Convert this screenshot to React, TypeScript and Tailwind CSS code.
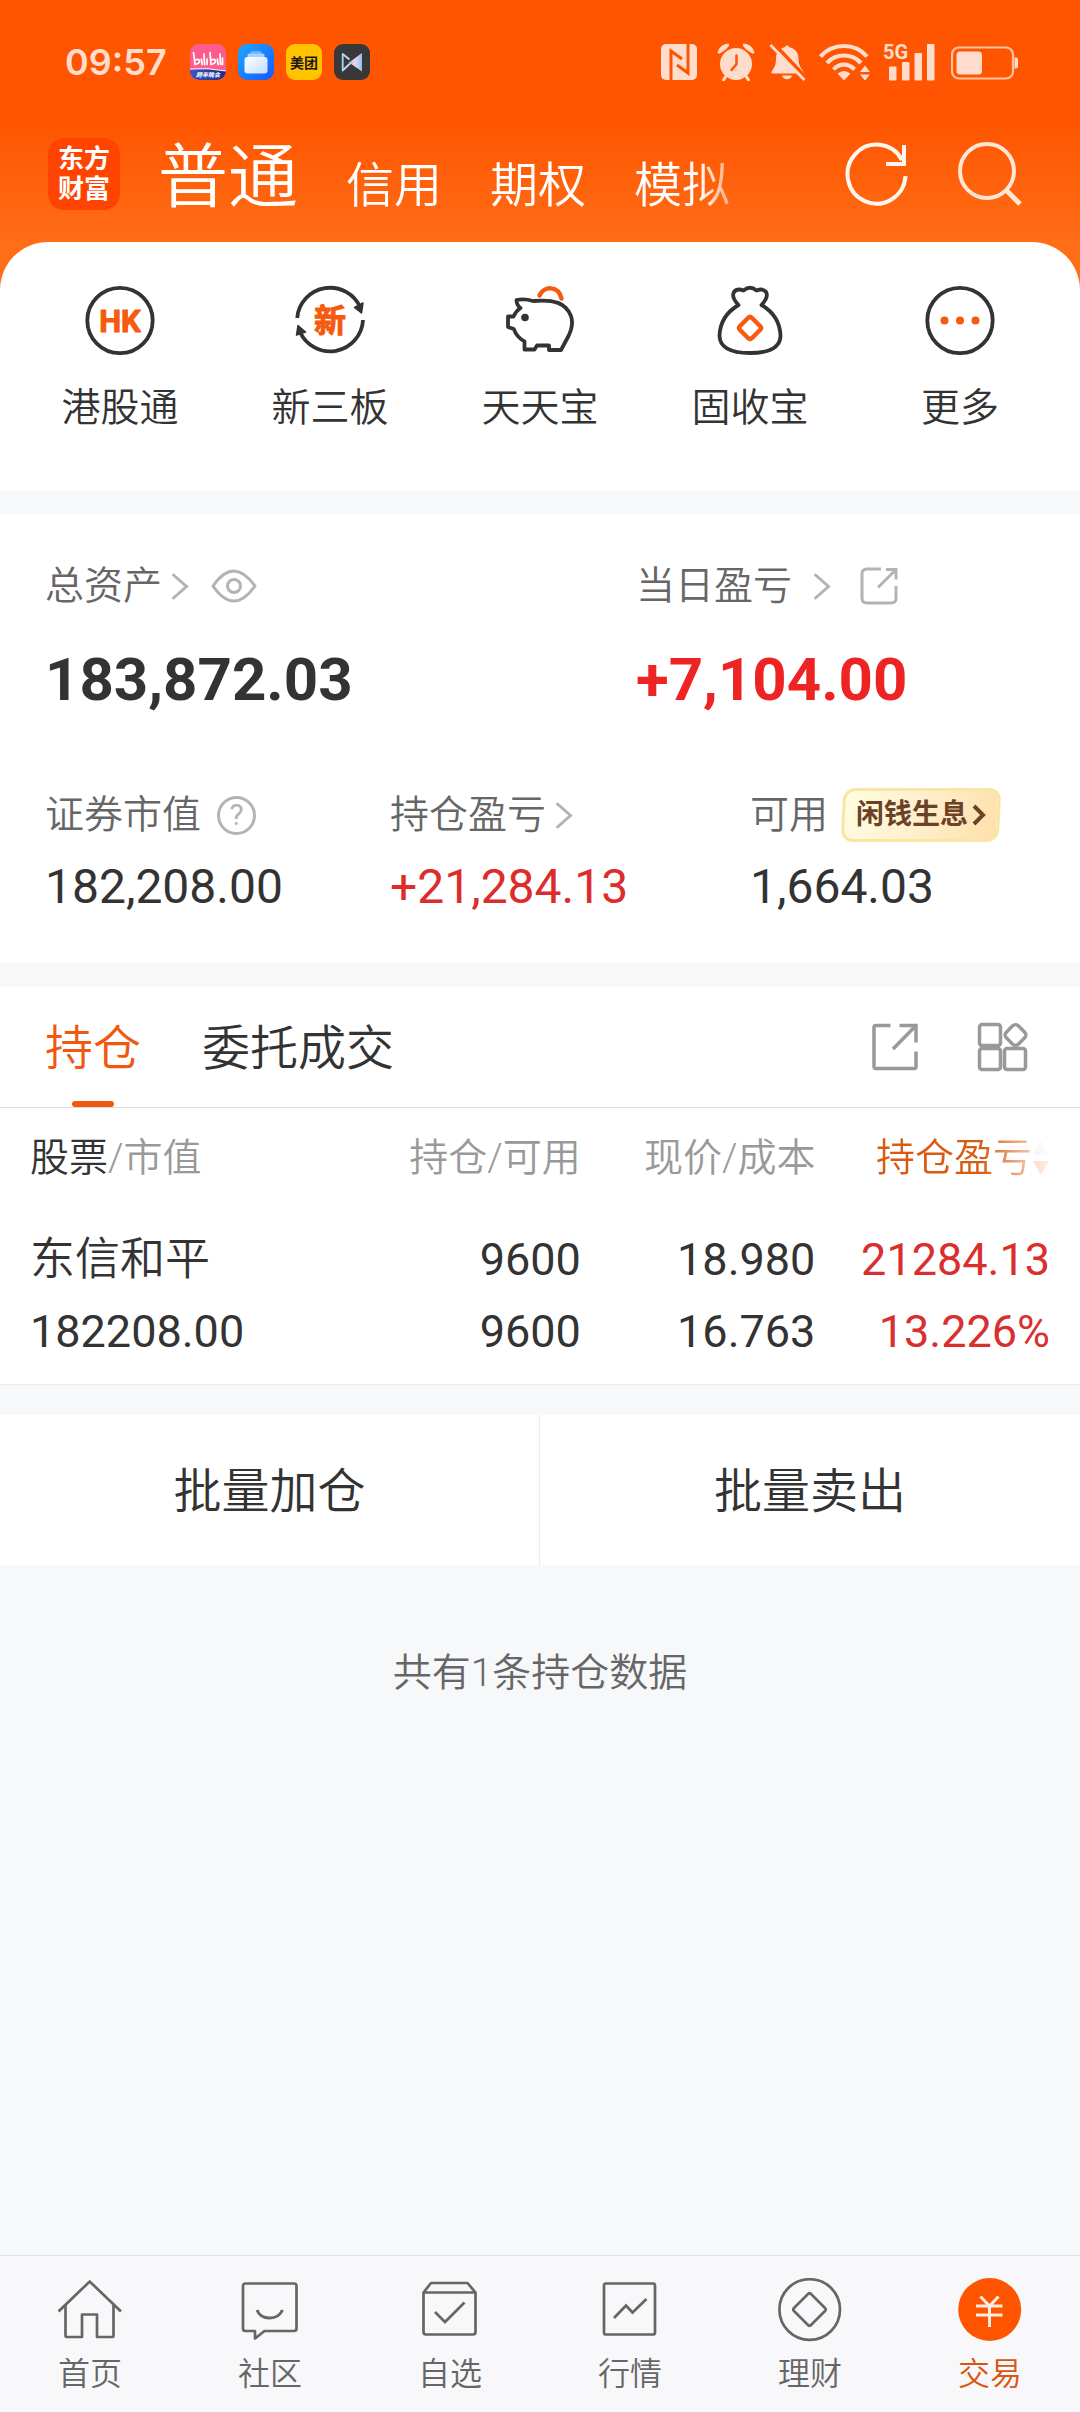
import type { ReactNode } from "react";

const STATUS = "#ffdccb";

function StatusIcons() {
  return (
    <div className="flex items-center" aria-hidden="true">
      <svg width="36" height="36" viewBox="0 0 36 36" fill="none">
        <rect width="36" height="36" rx="5" fill={STATUS} />
        <path d="M10 36V7l11 8M27 0v29L16 21" stroke="#ff5500" strokeWidth="3" />
      </svg>
      <svg className="ml-5" width="38" height="38" viewBox="0 0 38 38" fill="none">
        <circle cx="19" cy="21" r="16" fill={STATUS} />
        <path d="M1 9.500Q3 1.500 11.500 1Q13 4 2 10.500ZM37 9.500Q35 1.500 26.500 1Q25 4 36 10.500Z" fill={STATUS} stroke={STATUS} strokeLinejoin="round" />
        <path d="M9 33l-2.500 4M29 33l2.500 4" stroke={STATUS} strokeWidth="3" strokeLinecap="round" />
        <path d="M19.500 12.500v8.500l-5 6" stroke="#ff5500" strokeWidth="2.500" strokeLinecap="round" />
      </svg>
      <svg className="ml-[14px]" width="38" height="38" viewBox="0 0 38 38" fill="none">
        <path d="M18 2.500c1.500 0 2 1 2.200 1.700 6 1.300 9.300 5.500 9.300 11.300 0 8 3 9.500 5 13.500.5 1-.2 1.500-1 1.500H3.500c-1 0-1.500-.8-1-1.500 2-4 4.500-5.500 4.500-13.500 0-5.800 3-10 8.800-11.300.2-.7.700-1.700 2.200-1.700Z" fill={STATUS} />
        <path d="M13 32.500h10c-1 5-9 5-10 0Z" fill={STATUS} />
        <path d="M4 0l34 36" stroke="#ff5500" strokeWidth="4" />
        <path d="M1.500 2l34 35" stroke={STATUS} strokeWidth="2.800" />
      </svg>
      <svg className="ml-3" width="52" height="38" viewBox="0 0 52 38" fill="none">
        <g stroke={STATUS} strokeWidth="4.200">
          <path d="M1.500 13.500C14-.5 36-.5 48 13.500" />
          <path d="M8 20C17 10 33 10 42 20" />
          <path d="M14.500 26.500C20 20 29.500 20 35.500 26.500" />
        </g>
        <path d="M18.500 30.500Q25 25.500 31.500 30.500L25 37.500Z" fill={STATUS} />
        <path d="M41 29l5-6.500 5 6.500ZM41 31.500h10l-5 6Z" fill={STATUS} />
      </svg>
      <svg className="ml-3" width="52" height="54" viewBox="0 -8 52 54" fill={STATUS}>
        <text x="0" y="16" fontSize="20" fontWeight="700" fontFamily="Roboto, sans-serif">5G</text>
        <rect x="6" y="23.500" width="7.500" height="14" rx="1" />
        <rect x="19" y="19" width="7.500" height="18.500" rx="1" />
        <rect x="31.500" y="10" width="7.500" height="27.500" rx="1" />
        <rect x="44" y="1" width="7.500" height="36.500" rx="1" />
      </svg>
      <svg className="ml-4" width="68" height="38" viewBox="0 0 68 38" fill="none">
        <rect x="1" y="4.500" width="61" height="31" rx="7" stroke="#ffc49f" strokeWidth="2.200" />
        <rect x="5.500" y="8.500" width="25.500" height="23" rx="3.500" fill={STATUS} />
        <path d="M63.500 14.500h1.500a2 2 0 0 1 2 2v7a2 2 0 0 1-2 2h-1.500Z" fill={STATUS} />
      </svg>
    </div>
  );
}

function AppBadges() {
  return (
    <div className="flex items-center gap-3" aria-hidden="true">
      <svg width="36" height="36" viewBox="0 0 36 36">
        <defs>
          <clipPath id="bili"><rect width="36" height="36" rx="9" /></clipPath>
          <linearGradient id="biliBottom" x1="0" x2="1" y1="0" y2="0">
            <stop offset="0" stopColor="#3d55c4" />
            <stop offset="1" stopColor="#1b2c86" />
          </linearGradient>
        </defs>
        <g clipPath="url(#bili)">
          <rect width="36" height="36" fill="#ff5c8e" />
          <path d="M0 25.500Q18 23.500 36 27v9H0Z" fill="url(#biliBottom)" />
          <path d="M0 25Q18 23.500 36 27" stroke="#fff" strokeWidth="1" fill="none" />
          <g stroke="#fff" strokeWidth="1.700" fill="none" strokeLinecap="round" strokeLinejoin="round">
            <path d="M3.500 8.500l1.500 12q5-1 4.500-4-1-2-4.500-.5M11.500 15l.5 5.500M14 10l.5 10.500M17 15v5.500" />
            <path d="M20 8.500l1 12q5-1 4.500-4-1-2-4.500-.5M27.500 15l.5 5.500M30 10l.5 10.500M32.500 14v6.500" />
          </g>
        </g>
        <text x="18" y="33" textAnchor="middle" fontSize="6" fontWeight="700" fontStyle="italic" fill="#fff" fontFamily="'Noto Sans CJK SC', sans-serif">跨年晚会</text>
      </svg>
      <svg width="36" height="36" viewBox="0 0 36 36">
        <defs>
          <linearGradient id="wallet" x1="0" y1="0" x2="1" y2="1">
            <stop offset="0" stopColor="#1fa8ff" />
            <stop offset="1" stopColor="#1559ff" />
          </linearGradient>
          <linearGradient id="walletCard" x1="0" y1="0" x2="1" y2="1">
            <stop offset="0" stopColor="#ffffff" />
            <stop offset="1" stopColor="#c5dcff" />
          </linearGradient>
        </defs>
        <rect width="36" height="36" rx="9" fill="url(#wallet)" />
        <rect x="12.500" y="7" width="11" height="4" rx="1.500" fill="#64b4ff" />
        <rect x="9.500" y="9.500" width="17" height="5" rx="1.500" fill="#a2d2ff" />
        <rect x="6.500" y="13" width="23" height="16.500" rx="3" fill="url(#walletCard)" />
      </svg>
      <svg width="36" height="36" viewBox="0 0 36 36">
        <rect width="36" height="36" rx="9" fill="#ffc300" />
        <text x="18" y="23.500" textAnchor="middle" fontSize="14" fontWeight="700" fill="#1c1a12" fontFamily="'Noto Sans CJK SC', sans-serif">美团</text>
      </svg>
      <svg width="36" height="36" viewBox="0 0 36 36">
        <defs>
          <linearGradient id="bow" x1="0" x2="1" y1="0" y2="0">
            <stop offset="0" stopColor="#9adcf0" />
            <stop offset=".5" stopColor="#f3cdea" />
            <stop offset="1" stopColor="#86c8ee" />
          </linearGradient>
        </defs>
        <rect width="36" height="36" rx="9" fill="#383838" />
        <path d="M28 9v18.500L15 18.500Z" fill="url(#bow)" />
        <path d="M15.500 15.500L8.700 10v16.500l9.500-9" stroke="url(#bow)" strokeWidth="1.800" fill="none" strokeLinejoin="round" />
      </svg>
    </div>
  );
}

function QuickSvg({ children }: { children: ReactNode }) {
  return (
    <svg width="72" height="72" viewBox="0 0 72 72" fill="none" stroke="#333333" strokeWidth="3.800" strokeLinejoin="round" aria-hidden="true">
      {children}
    </svg>
  );
}

const quickLinks = [
  {
    label: "港股通",
    icon: (
      <QuickSvg>
        <circle cx="36" cy="36.500" r="32.700" />
        <text x="36" y="48" textAnchor="middle" fontSize="31" fontWeight="700" fill="#f55a0f" stroke="#f55a0f" strokeWidth="1" fontFamily="Roboto, sans-serif">HK</text>
      </QuickSvg>
    ),
  },
  {
    label: "新三板",
    icon: (
      <QuickSvg>
        <path d="M3.200 34A33 33 0 0 1 66.500 24M69 36A33 33 0 0 1 6 48" />
        <path d="M60.500 23.500L69 19l-1.500 10ZM4 41.500l7.500 6.500L2.500 51Z" fill="#333333" strokeWidth="1.500" />
        <text x="36" y="48" textAnchor="middle" fontSize="32" fontWeight="700" fill="#f55a0f" stroke="#f55a0f" strokeWidth="1" fontFamily="'Noto Sans CJK SC', sans-serif">新</text>
      </QuickSvg>
    ),
  },
  {
    label: "天天宝",
    icon: (
      <QuickSvg>
        <path d="M12.500 16Q21 14.500 29 17C50 15 62 19 67 32Q70 41 64.500 52L57 66H45v-4.500H33L30.500 65.500H20.500V57.500Q12.500 53 9.800 45L4 43V32.500H9.500Q12 27 16.500 24Q12.500 21 12.500 16Z" />
        <circle cx="21" cy="33.500" r="3.800" fill="#333333" stroke="none" />
        <path d="M35.500 11.500C40 1.500 54.500 1.500 57.500 14.500" stroke="#f55a0f" strokeWidth="4.500" strokeLinecap="round" />
      </QuickSvg>
    ),
  },
  {
    label: "固收宝",
    icon: (
      <QuickSvg>
        <path d="M24.500 21Q17 13 20 8Q23 4 29.500 6.500Q36 1 42.500 6.500Q49 4 52 8Q55 13 47.500 21Q66 32 66.500 52C66 65 54 69 36 69S6 65 5.500 52Q6 32 24.500 21Z" />
        <path d="M38 34l8 8q2 2 0 4l-8 8q-2 2-4 0l-8-8q-2-2 0-4l8-8q2-2 4 0Z" stroke="#f55a0f" strokeWidth="4.500" />
      </QuickSvg>
    ),
  },
  {
    label: "更多",
    icon: (
      <QuickSvg>
        <circle cx="36" cy="36.500" r="32.700" />
        <g fill="#f55a0f" stroke="none">
          <circle cx="20.500" cy="36.500" r="4" />
          <circle cx="36" cy="36.500" r="4" />
          <circle cx="51.500" cy="36.500" r="4" />
        </g>
      </QuickSvg>
    ),
  },
];

function NavSvg({ children }: { children: ReactNode }) {
  return (
    <svg width="64" height="64" viewBox="0 0 64 64" fill="none" stroke="#666666" strokeWidth="2.700" strokeLinejoin="round" aria-hidden="true">
      {children}
    </svg>
  );
}

const navItems = [
  {
    label: "首页",
    icon: (
      <NavSvg>
        <path d="M.5 33.500L31.700 3.500 63 33.500" strokeLinejoin="miter" />
        <path d="M7.500 27v30.500q0 1.500 1.500 1.500h15V36.500h15V59h15q1.500 0 1.500-1.500V27" />
      </NavSvg>
    ),
  },
  {
    label: "社区",
    icon: (
      <NavSvg>
        <path d="M7.500 5.500h48.500q2.500 0 2.500 2.500v42.500q0 2.500-2.500 2.500H26.500L17 60.500V53H7.500Q5 53 5 50.500V8q0-2.500 2.500-2.500Z" />
        <path d="M19 32Q22 40 31.500 40T44.500 32" strokeWidth="3" />
      </NavSvg>
    ),
  },
  {
    label: "自选",
    icon: (
      <NavSvg>
        <path d="M5.500 14.500L13 5h36.500l8 9.500V54q0 2.500-2.500 2.500H8q-2.500 0-2.500-2.500ZM5.500 14.500h52" />
        <path d="M17 34l10 10 19.500-19.500" strokeLinejoin="miter" />
      </NavSvg>
    ),
  },
  {
    label: "行情",
    icon: (
      <NavSvg>
        <rect x="6" y="5.500" width="51" height="51" rx="2" />
        <path d="M16 40l12-12.500 6.500 7L48.500 21" strokeLinejoin="miter" />
      </NavSvg>
    ),
  },
  {
    label: "理财",
    icon: (
      <NavSvg>
        <circle cx="31.700" cy="31.500" r="30.300" />
        <path d="M33 16l14 14q1.500 1.500 0 3L33 47q-1.500 1.500-3 0L16 33q-1.500-1.500 0-3l14-14q1.500-1.500 3 0Z" />
      </NavSvg>
    ),
  },
  {
    label: "交易",
    active: true,
    icon: (
      <NavSvg>
        <circle cx="31.700" cy="31.500" r="31.500" fill="#ff5500" stroke="none" />
        <path d="M22.500 18.500l9 9.500 9-9.500M18 28h26.500M18 37h26.500M31.500 28v21" stroke="#ffece2" strokeWidth="3" strokeLinejoin="miter" />
      </NavSvg>
    ),
  },
];

function Chevron() {
  return (
    <svg width="18" height="28" viewBox="0 0 18 28" fill="none" stroke="#b3b3b3" strokeWidth="3" strokeLinecap="round" aria-hidden="true">
      <path d="M2.500 3L15.500 14.500 2.500 26" />
    </svg>
  );
}

const holdings = [
  { name: "东信和平", value: "182208.00", held: "9600", available: "9600", price: "18.980", cost: "16.763", profit: "21284.13", rate: "13.226%" },
];

export default function App() {
  return (
    <div className="flex min-h-screen w-full flex-col bg-[#f7f8fa] font-[Roboto,'Noto_Sans_CJK_SC',sans-serif] text-[#333333]">
      <header className="bg-[linear-gradient(to_bottom,#ff5500_120px,#ff6d17_242px)] pt-[43px] pb-20">
        <div className="flex h-[38px] items-center justify-between pr-[61px] pl-[65px]">
          <div className="flex items-center gap-[23px]">
            <span className="font-[Inter,sans-serif] text-[36px] leading-[38px] font-semibold text-[#ffdccb]">09:57</span>
            <AppBadges />
          </div>
          <StatusIcons />
        </div>
        <div className="mt-[57px] flex h-[72px] items-center pr-[57px] pl-12">
          <div className="flex size-[72px] shrink-0 flex-col items-center justify-center rounded-2xl bg-[#ff4400] text-[26px] leading-[30px] font-bold text-white">
            <span>东方</span>
            <span>财富</span>
          </div>
          <nav className="ml-[38px] flex flex-1 items-baseline gap-12 overflow-hidden pt-4 whitespace-nowrap text-white [mask-image:linear-gradient(to_right,#000_540px,transparent_600px)]">
            <button className="text-[70px] leading-[80px] font-[350]">普通</button>
            <button className="text-[48px] leading-[80px] font-[350]">信用</button>
            <button className="text-[48px] leading-[80px] font-[350]">期权</button>
            <button className="text-[48px] leading-[80px] font-[350]">模拟</button>
          </nav>
          <div className="flex items-center gap-12">
            <button aria-label="刷新">
              <svg width="64" height="66" viewBox="0 0 64 66" fill="none" stroke="#fff6ef" strokeWidth="4">
                <path d="M60.500 35A29 29.500 0 1 1 57 19" />
                <path d="M59 4v19H41" />
              </svg>
            </button>
            <button aria-label="搜索">
              <svg width="66" height="66" viewBox="0 0 66 66" fill="none" stroke="#ffe6d4" strokeWidth="4">
                <circle cx="30" cy="30" r="27" />
                <path d="M49 49l14 14" strokeWidth="5" />
              </svg>
            </button>
          </div>
        </div>
      </header>

      <main className="flex-1">
        <section className="-mt-12 grid grid-cols-5 rounded-t-[48px] bg-white px-[15px] pt-[42px] pb-[58px]">
          {quickLinks.map((q) => (
            <button key={q.label} className="flex flex-col items-center gap-7">
              {q.icon}
              <span className="text-[39px] leading-[48px] font-[350]">{q.label}</span>
            </button>
          ))}
        </section>

        <section className="mt-6 bg-white pt-12 pb-12 pl-[45px]">
          <div className="grid grid-cols-[591fr_444fr]">
            <div>
              <div className="flex h-12 items-center text-[39px] leading-[48px] font-[350] text-[#666666]">
                总资产
                <span className="ml-[9px] flex"><Chevron /></span>
                <button className="ml-[22px]" aria-label="显示或隐藏资产">
                  <svg width="46" height="34" viewBox="0 0 46 34" fill="none" stroke="#b3b3b3" strokeWidth="3">
                    <path d="M2 17Q22.500-13 44 17Q22.500 47 2 17Z" strokeLinejoin="round" />
                    <circle cx="23" cy="17" r="6.500" />
                  </svg>
                </button>
              </div>
              <div className="mt-[34px] text-[60px] leading-[72px] font-bold">183,872.03</div>
            </div>
            <div>
              <div className="flex h-12 items-center text-[39px] leading-[48px] font-[350] text-[#666666]">
                当日盈亏
                <span className="ml-[21px] flex"><Chevron /></span>
                <button className="ml-7" aria-label="分享当日盈亏">
                  <svg width="40" height="40" viewBox="0 0 40 40" fill="none" stroke="#b3b3b3" strokeWidth="3">
                    <path d="M22 3H8Q3 3 3 8v24q0 5 5 5h24q5 0 5-5V20" />
                    <path d="M27 3.500h10v10M37 3.500L19 21.500" />
                  </svg>
                </button>
              </div>
              <div className="mt-[34px] text-[60px] leading-[72px] font-bold text-[#ee2424]">+7,104.00</div>
            </div>
          </div>
          <div className="mt-[75px] grid grid-cols-[345fr_360fr_330fr]">
            <div>
              <div className="flex h-12 items-center text-[39px] leading-[48px] font-[350] text-[#666666]">
                证券市值
                <button className="ml-4 flex size-[39px] items-center justify-center rounded-full border-[3px] border-[#b3b3b3] text-[30px] leading-[30px] font-normal text-[#b3b3b3]" aria-label="说明">?</button>
              </div>
              <div className="mt-5 text-[48px] leading-[56px]">182,208.00</div>
            </div>
            <div>
              <div className="flex h-12 items-center text-[39px] leading-[48px] font-[350] text-[#666666]">
                持仓盈亏
                <span className="ml-[9px] flex"><Chevron /></span>
              </div>
              <div className="mt-5 text-[48px] leading-[56px] text-[#dc2c2c]">+21,284.13</div>
            </div>
            <div>
              <div className="flex h-12 items-center text-[39px] leading-[48px] font-[350] text-[#666666]">
                可用
                <button className="relative ml-[14px] flex h-[54px] items-center gap-1 px-[14px] text-[28px] leading-[54px] font-bold text-[#6b4226]">
                  <span className="absolute inset-0 -skew-x-3 rounded-xl border-[3px] border-[#fae6a4] bg-[linear-gradient(105deg,#fffde0,#fff0cf_45%,#fee0ab)]" />
                  <span className="relative">闲钱生息</span>
                  <svg className="relative" width="14" height="22" viewBox="0 0 14 22" fill="none" stroke="#6b4226" strokeWidth="4" aria-hidden="true">
                    <path d="M2 2l9 9-9 9" />
                  </svg>
                </button>
              </div>
              <div className="mt-5 text-[48px] leading-[56px]">1,664.03</div>
            </div>
          </div>
        </section>

        <section className="mt-6 border-b border-[#ececee] bg-white">
          <div className="flex h-[121px] items-stretch border-b border-[#dddddd] pr-[51px] pl-[45px]">
            <button className="relative pt-1 text-[48px] leading-[116px] font-[350] text-[#f0580f]">
              持仓
              <span className="absolute bottom-0 left-1/2 h-1.5 w-[42px] -translate-x-1/2 rounded-full bg-[#f0580f]" />
            </button>
            <button className="ml-[61px] pt-1 text-[48px] leading-[116px] font-[350]">委托成交</button>
            <button className="ml-auto" aria-label="分享持仓">
              <svg width="48" height="48" viewBox="0 0 48 48" fill="none" stroke="#999999" strokeWidth="3.500">
                <path d="M19.500 2.500H5Q3 2.500 3 4.500v39q0 2 2 2h38q2 0 2-2V28.500" />
                <path d="M28.500 2.500H45v17M45 2.500L22 26" />
              </svg>
            </button>
            <button className="ml-[58px]" aria-label="更多功能">
              <svg width="52" height="50" viewBox="0 0 52 50" fill="none" stroke="#999999" strokeWidth="3.500">
                <rect x="2.500" y="2.500" width="21" height="21" rx="2.500" />
                <rect x="2.500" y="26.500" width="21" height="21" rx="2.500" />
                <rect x="27.500" y="26.500" width="21" height="21" rx="2.500" />
                <rect x="30" y="4.500" width="17" height="17" rx="4" transform="rotate(45 38.500 13)" />
              </svg>
            </button>
          </div>
          <div className="px-[30px] pb-4">
            <table className="w-full table-fixed border-collapse">
              <thead>
                <tr className="text-[39px] leading-[60px] text-[#999999]">
                  <th className="w-[30%] pt-5 pb-9 text-left font-[350]"><span className="text-[#333333]">股票</span>/市值</th>
                  <th className="w-[24%] pt-5 pb-9 text-right font-[350]">持仓/可用</th>
                  <th className="w-[23%] pt-5 pb-9 text-right font-[350]">现价/成本</th>
                  <th className="w-[23%] pt-5 pb-9 font-[350]">
                    <button className="ml-auto flex items-center text-[#d95b12] [mask-image:linear-gradient(to_right,#000_60%,transparent_105%)]">
                      持仓盈亏
                      <svg width="18" height="38" viewBox="0 0 18 38" aria-hidden="true">
                        <path d="M1 16L9 2l8 14Z" fill="#e4e4e4" />
                        <path d="M1 22h16L9 36Z" fill="#ff8a50" />
                      </svg>
                    </button>
                  </th>
                </tr>
              </thead>
              <tbody>
                {holdings.map((h) => (
                  <tr key={h.name} className="text-right text-[45px] leading-[72px]">
                    <td className="p-0 text-left"><div className="font-[350]">{h.name}</div><div>{h.value}</div></td>
                    <td className="p-0"><div>{h.held}</div><div>{h.available}</div></td>
                    <td className="p-0"><div>{h.price}</div><div>{h.cost}</div></td>
                    <td className="p-0 text-[#d92f2f]"><div>{h.profit}</div><div>{h.rate}</div></td>
                  </tr>
                ))}
              </tbody>
            </table>
          </div>
        </section>

        <div className="mt-[30px] grid grid-cols-2 bg-white text-[48px] leading-[146px] font-[350]">
          <button className="border-r border-[#ececee] pt-1">批量加仓</button>
          <button className="pt-1">批量卖出</button>
        </div>
        <p className="mt-20 text-center text-[39px] leading-[56px] font-[350] text-[#666666]">共有1条持仓数据</p>
      </main>

      <nav className="grid grid-cols-6 border-t border-[#dfe2e5] bg-[#f8f8fa] pt-[22px] pb-[18px]">
        {navItems.map((n) => (
          <a key={n.label} href="#" className={n.active ? "flex flex-col items-center gap-3 text-[#d9560f]" : "flex flex-col items-center gap-3 text-[#666666]"}>
            {n.icon}
            <span className="text-[32px] leading-10 font-[350]">{n.label}</span>
          </a>
        ))}
      </nav>
    </div>
  );
}
